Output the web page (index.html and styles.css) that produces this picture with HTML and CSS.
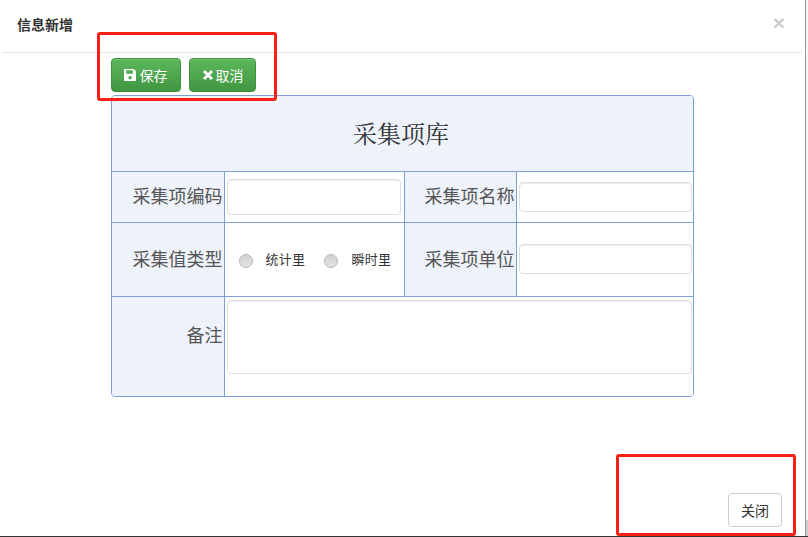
FILE: index.html
```html
<!DOCTYPE html>
<html lang="zh-CN">
<head>
<meta charset="utf-8">
<title>信息新增</title>
<link rel="stylesheet" href="styles.css">
</head>
<body>
<div class="page">
  <div class="dialog">
    <header class="dialog-head">
      <h4 class="dialog-title">信息新增</h4>
      <span class="close">×</span>
    </header>
    <main class="dialog-body">
      <div class="toolbar">
        <button class="btn btn-green btn-save" type="button">
          <svg class="icon" viewBox="0 0 14 14"><path fill-rule="evenodd" d="M1.5 1h9.2L13 3.3v8.7q0 1-1 1H2q-1 0-1-1V1.5q0-.5.5-.5zM3.2 2.2v3.6h6.6V2.200zM7 8a1.700 1.700 0 1 0 0 3.400A1.700 1.700 0 0 0 7 8z" fill="#fff"/></svg>保存
        </button>
        <button class="btn btn-green btn-cancel" type="button">
          <svg class="icon icon-x" viewBox="0 0 12 12"><path d="M2 2l8 8M10 2l-8 8" stroke="#fff" stroke-width="3" fill="none"/></svg>取消
        </button>
      </div>
      <div class="form-card">
        <table class="form-table">
          <colgroup>
            <col class="col-a"><col class="col-b"><col class="col-c"><col class="col-d">
          </colgroup>
          <tr class="row-title"><th colspan="4" class="title-cell">采集项库</th></tr>
          <tr class="row-one">
            <td class="label">采集项编码</td>
            <td class="field"><input class="input input-tall" type="text"></td>
            <td class="label">采集项名称</td>
            <td class="field"><input class="input" type="text"></td>
          </tr>
          <tr class="row-two">
            <td class="label">采集值类型</td>
            <td class="field">
              <div class="radios">
                <label class="radio"><input type="radio" name="kind"><span>统计里</span></label>
                <label class="radio"><input type="radio" name="kind"><span>瞬时里</span></label>
              </div>
            </td>
            <td class="label">采集项单位</td>
            <td class="field"><input class="input" type="text"></td>
          </tr>
          <tr class="row-three">
            <td class="label label-note">备注</td>
            <td class="field field-note" colspan="3"><textarea class="note"></textarea></td>
          </tr>
        </table>
      </div>
    </main>
    <footer class="dialog-foot">
      <button class="btn btn-default" type="button">关闭</button>
    </footer>
  </div>
  <div class="edge"><div class="edge-thumb"></div></div>
</div>
<div class="mark mark-top"></div>
<div class="mark mark-bottom"></div>
</body>
</html>
```
FILE: styles.css
```css
* { box-sizing: border-box; }
html, body { margin: 0; height: 537px; overflow: hidden; }
body {
  background: #333;
  font-family: "Liberation Sans", "Noto Sans CJK SC", sans-serif;
  color: #333;
  position: relative;
}
.page { display: flex; height: 536px; background: #fff; }
.dialog {
  width: 806px;
  border-right: 1px solid #999;
  display: flex;
  flex-direction: column;
}
.edge { flex: 1; background: #f6f6f6; display: flex; flex-direction: column; justify-content: flex-end; }
.edge-thumb { height: 16px; background: #ccc; }
.dialog-head {
  height: 53px;
  margin: 0 3px 0 2px;
  padding: 0 14px 0 14px;
  border-bottom: 1px solid #e5e5e5;
  display: flex;
  justify-content: space-between;
  align-items: center;
}
.dialog-title { margin: 0 0 0 1px; font-size: 14px; font-weight: 700; color: #333; line-height: 20px; position: relative; top: -1px; }
.close { font-size: 21px; font-weight: 700; color: #ccc; line-height: 21px; margin-right: 3px; position: relative; top: -4px; }
.dialog-body { padding: 5px 0 0 111px; }
.toolbar { display: flex; gap: 8px; height: 37px; }
.btn {
  font-family: inherit;
  font-size: 14px;
  height: 34px;
  border-radius: 4px;
  padding: 0;
  display: inline-flex;
  align-items: center;
  justify-content: center;
}
.btn-green {
  color: #fff;
  background: linear-gradient(#5cb85c, #419641);
  border: 1px solid #3e8f3e;
  box-shadow: inset 0 1px 0 rgba(255,255,255,.15);
  padding-right: 2px;
}
.btn-save { width: 70px; }
.btn-cancel { width: 67px; padding-right: 0; }
.icon { width: 14px; height: 14px; margin-right: 3px; }
.icon-x { width: 12px; height: 12px; margin-right: 2px; }
.btn-default { width: 54px; color: #333; background: #fff; border: 1px solid #ccc; }
.form-card {
  width: 583px;
  height: 302px;
  border: 1px solid #7d9fdb;
  border-radius: 4px;
  overflow: hidden;
}
.form-table { width: 581px; height: 300px; border-collapse: collapse; table-layout: fixed; }
.col-a { width: 112px; }
.col-b { width: 180px; }
.col-c { width: 112px; }
.col-d { width: 177px; }
.row-title { height: 75px; }
.row-one { height: 51px; }
.row-two { height: 74px; }
.row-three { height: 100px; }
.form-table td, .form-table th { border: 1px solid #7d9fdb; padding: 0; }
.form-table tr:first-child th { border-top: 0; border-left: 0; }
.form-table tr:last-child td { border-bottom: 0; }
.form-table td:first-child { border-left: 0; }
.form-table td:last-child, .form-table th:last-child { border-right: 0; }
.title-cell {
  background: #eef2fb;
  font-family: "Liberation Serif", "Noto Serif CJK SC", "Noto Sans CJK SC", serif;
  font-size: 24px;
  font-weight: 400;
  color: #333;
  text-align: center;
  padding: 0 3px 2px 0 !important;
}
.label {
  background: #eef2fb;
  font-size: 18px;
  color: #555;
  text-align: right;
  padding: 0 1px 3px 0 !important;
  white-space: nowrap;
}
.label-note { padding-bottom: 24px !important; }
.field { padding: 0 1px 0 2px !important; background: #fff; }
.field-note { vertical-align: top; padding-top: 3px !important; }
.input, .note {
  display: block;
  width: 100%;
  height: 30px;
  border: 1px solid #ddd;
  border-radius: 4px;
  background: #fff;
  box-shadow: inset 0 1px 1px rgba(0,0,0,.075);
  padding: 0;
  margin: 0;
}
.input-tall { height: 36px; width: 174px; }
.note { height: 74px; resize: none; }
.radios { display: flex; gap: 19px; padding-left: 12px; align-items: center; position: relative; top: 1px; }
.radio { display: flex; align-items: center; gap: 13px; font-size: 13px; color: #333; line-height: 18px; letter-spacing: .3px; }
.radio input {
  appearance: none;
  -webkit-appearance: none;
  width: 14px;
  height: 14px;
  margin: 2px 0 0;
  border: 1px solid #b5b5b5;
  border-radius: 50%;
  background: linear-gradient(#d2d2d2, #e4e4e4);
}
.dialog-foot { margin-top: auto; padding: 0 23px 9px 0; display: flex; justify-content: flex-end; }
.mark { position: absolute; border: 3px solid #fb2015; border-radius: 3px; pointer-events: none; }
.mark-top { left: 97px; top: 32px; width: 180px; height: 69px; }
.mark-bottom { left: 616px; top: 454px; width: 180px; height: 82px; }
```
